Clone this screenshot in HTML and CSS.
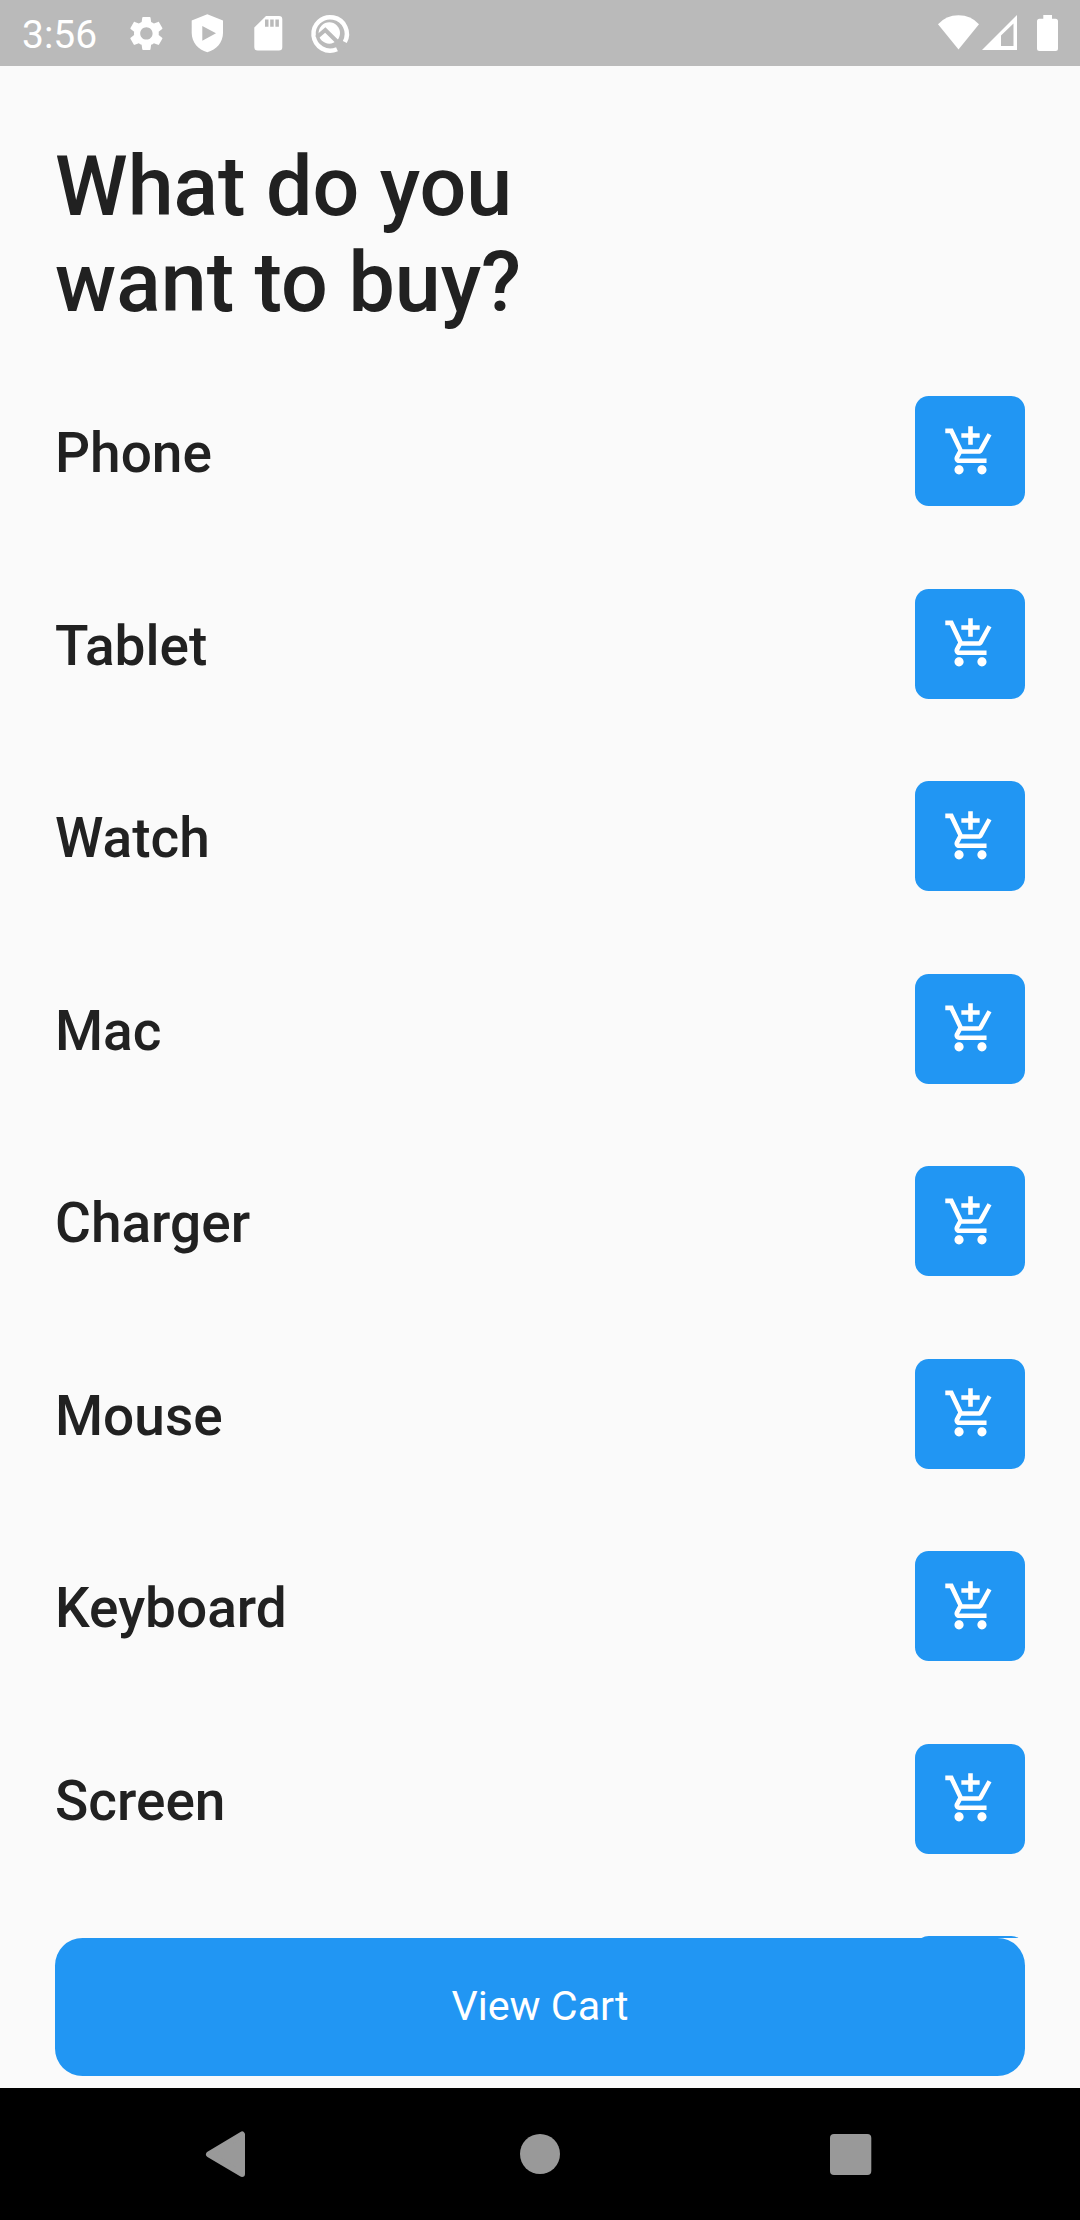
FILE: index.html
```html
<!DOCTYPE html>
<html lang="en">
<head>
<meta charset="utf-8">
<title>Shop</title>
<link rel="stylesheet" href="styles.css">
</head>
<body>
<svg class="defs" aria-hidden="true">
  <symbol id="add-cart" viewBox="0 0 24 24"><path d="M11 9h2V6h3V4h-3V1h-2v3H8v2h3v3zm-4 9c-1.1 0-1.99.9-1.99 2S5.9 22 7 22s2-.9 2-2-.9-2-2-2zm10 0c-1.1 0-1.99.9-1.99 2s.89 2 1.99 2 2-.9 2-2-.9-2-2-2zm-8.9-5h7.45c.75 0 1.41-.41 1.75-1.03l3.86-7.01L19.42 4l-3.87 7H8.53L4.27 2H1v2h2l3.6 7.59-1.35 2.44C4.52 15.37 5.48 17 7 17h12v-2H7l1.1-2z"/></symbol>
</svg>
<div class="screen">
  <header class="status">
    <span class="clock">3:56</span>
    <svg class="status-left" viewBox="120 0 240 66">
      <g transform="translate(125.75 12.75) scale(1.72)"><path d="M19.14 12.94c.04-.3.06-.61.06-.94 0-.32-.02-.64-.07-.94l2.03-1.58c.18-.14.23-.41.12-.61l-1.92-3.32c-.12-.22-.37-.29-.59-.22l-2.39.96c-.5-.38-1.03-.7-1.62-.94l-.36-2.54c-.04-.24-.24-.41-.48-.41h-3.84c-.24 0-.43.17-.47.41l-.36 2.54c-.59.24-1.13.57-1.62.94l-2.39-.96c-.22-.08-.47 0-.59.22L2.74 8.87c-.12.21-.08.47.12.61l2.03 1.58c-.05.3-.09.63-.09.94s.02.64.07.94l-2.03 1.58c-.18.14-.23.41-.12.61l1.92 3.32c.12.22.37.29.59.22l2.39-.96c.5.38 1.03.7 1.62.94l.36 2.54c.05.24.24.41.48.41h3.84c.24 0 .44-.17.47-.41l.36-2.54c.59-.24 1.13-.56 1.62-.94l2.39.96c.22.08.47 0 .59-.22l1.92-3.32c.12-.22.07-.47-.12-.61l-2.01-1.58zM12 15.6c-1.98 0-3.6-1.62-3.6-3.6s1.62-3.6 3.6-3.6 3.6 1.62 3.6 3.6-1.62 3.6-3.6 3.6z"/></g>
      <path fill-rule="evenodd" d="M207.3 14.3 223 20.5V33C223 42 216.500 50 207.300 52.200 198.200 50 191.700 42 191.700 33V20.500ZM202.300 26V40.700L216 33.300Z"/>
      <path fill-rule="evenodd" d="M266 16H279Q282.300 16 282.300 19.300V47.300Q282.300 50.600 279 50.600H257.700Q254.300 50.600 254.300 47.300V27.500ZM265 19.500V26.800H268.500V19.500ZM270.200 19.500V26.800H273.700V19.500ZM275.400 19.500V26.800H278.900V19.500Z"/>
      <path class="ring" d="M337 49.200A16.700 16.700 0 1 1 344.800 42"/>
      <circle cx="329.300" cy="33" r="10.700"/>
      <path class="cut" d="M316.500 37.500 325.300 30 344 48.500"/>
    </svg>
    <svg class="status-right" viewBox="930 0 150 66">
      <path d="M938 24.300Q946 15.300 958.500 15.300T979 24.300L958.500 49.500Z"/>
      <path fill-rule="evenodd" d="M982 50 1017 15V50ZM1001 35.500V46H1013.500V23.500Z"/>
      <path d="M1043.300 15H1052V18.700H1055.500Q1058 18.700 1058 21.200V48.500Q1058 51 1055.500 51H1039.500Q1037 51 1037 48.500V21.200Q1037 18.700 1039.500 18.700H1043.300Z"/>
    </svg>
  </header>
  <main class="content">
    <h1 class="title">What do you<br>want to buy?</h1>
    <ul class="list">
      <li class="row"><span class="name">Phone</span><button class="add" aria-label="Add Phone"><svg><use href="#add-cart"/></svg></button></li>
      <li class="row"><span class="name">Tablet</span><button class="add" aria-label="Add Tablet"><svg><use href="#add-cart"/></svg></button></li>
      <li class="row"><span class="name">Watch</span><button class="add" aria-label="Add Watch"><svg><use href="#add-cart"/></svg></button></li>
      <li class="row"><span class="name">Mac</span><button class="add" aria-label="Add Mac"><svg><use href="#add-cart"/></svg></button></li>
      <li class="row"><span class="name">Charger</span><button class="add" aria-label="Add Charger"><svg><use href="#add-cart"/></svg></button></li>
      <li class="row"><span class="name">Mouse</span><button class="add" aria-label="Add Mouse"><svg><use href="#add-cart"/></svg></button></li>
      <li class="row"><span class="name">Keyboard</span><button class="add" aria-label="Add Keyboard"><svg><use href="#add-cart"/></svg></button></li>
      <li class="row"><span class="name">Screen</span><button class="add" aria-label="Add Screen"><svg><use href="#add-cart"/></svg></button></li>
      <li class="row"><span class="name"></span><button class="add" aria-label="Add item"></button></li>
    </ul>
    <button class="view-cart">View Cart</button>
  </main>
  <nav class="navbar">
    <svg viewBox="0 0 1080 132">
      <path class="back" d="M209 66.300 242 46.500V86Z"/>
      <circle cx="540" cy="66" r="20"/>
      <rect x="830" y="46" width="41.300" height="41" rx="4"/>
    </svg>
  </nav>
</div>
</body>
</html>
```
FILE: styles.css
```css
* { box-sizing: border-box; }
body { margin: 0; background: #fafafa; font-family: Roboto, sans-serif; color: #212121; }
.defs { position: absolute; width: 0; height: 0; }
.screen { display: flex; flex-direction: column; width: 1080px; height: 2220px; overflow: hidden; }
.status { display: flex; align-items: center; flex: none; height: 66px; background: #bababa; color: #fff; }
.clock { width: 98px; margin-right: 22px; padding-left: 22px; font-size: 39px; line-height: 66px; padding-top: 3px; white-space: nowrap; }
.status svg { height: 66px; fill: #fff; }
.status-left { width: 240px; }
.status-right { width: 150px; margin-left: auto; }
.ring { fill: none; stroke: #fff; stroke-width: 4.5; }
.cut { fill: none; stroke: #bababa; stroke-width: 4; }
.content { display: flex; flex-direction: column; flex: 1; min-height: 0; padding: 72.5px 55px 12.5px; }
.title { flex: none; margin: 0; height: 216.25px; font-size: 82.5px; font-weight: 500; line-height: 96px; }
.list { flex: 1; min-height: 0; margin: 0; padding: 0; overflow: hidden; list-style: none; }
.row { display: flex; align-items: center; justify-content: space-between; height: 192.5px; font-size: 55px; font-weight: 500; line-height: 64px; }
.name { padding-top: 4px; }
.add { display: flex; align-items: center; justify-content: center; width: 110px; height: 110px; padding: 0; border: 0; border-radius: 13.75px; background: #2196f3; }
.add svg { width: 55px; height: 55px; fill: #fff; }
.view-cart { flex: none; height: 137.5px; padding: 0 0 2px; border: 0; border-radius: 27.5px; background: #2196f3; color: #fff; font: 400 41.25px Roboto, sans-serif; }
.navbar { flex: none; height: 132px; background: #000; }
.navbar svg { display: block; width: 1080px; height: 132px; fill: #999; }
.back { stroke: #999; stroke-width: 6; stroke-linejoin: round; }
```
